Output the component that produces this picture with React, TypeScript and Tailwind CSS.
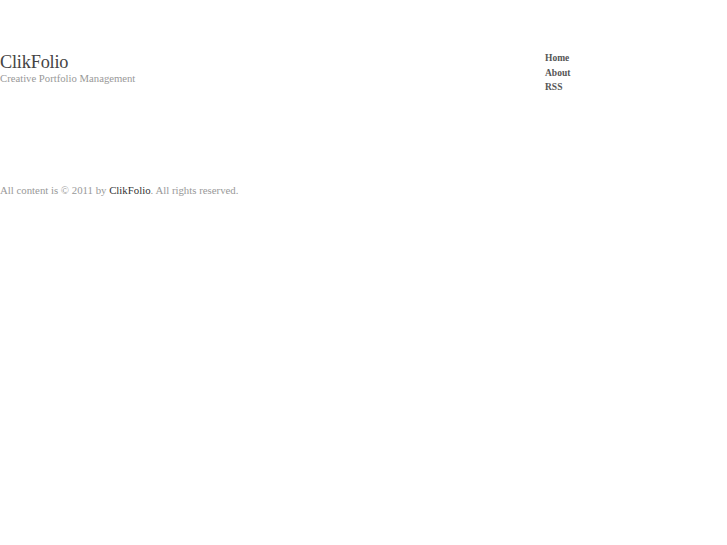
const serif = { fontFamily: '"Liberation Serif", "Times New Roman", serif' };

export default function App() {
  return (
    <div className="min-h-[545px] w-full bg-white" style={serif}>
      <div className="flex pt-[52px]">
        <div className="w-[545px] shrink-0">
          <h1 className="text-[18.3px] leading-[20px] font-normal tracking-[-0.2px] text-[#444]">ClikFolio</h1>
          <p className="mt-[-1px] text-[10.7px] leading-[14px] text-[#999]">Creative Portfolio Management</p>
        </div>
        <ul className="mt-[-1px] text-[9.5px] font-bold leading-[14.5px] text-[#555]">
          <li>Home</li>
          <li>About</li>
          <li>RSS</li>
        </ul>
      </div>
      <p className="mt-[88px] text-[10.8px] leading-[14px] text-[#999]">
        All content is © 2011 by <span className="text-[#333]">ClikFolio</span>. All rights reserved.
      </p>
    </div>
  );
}
